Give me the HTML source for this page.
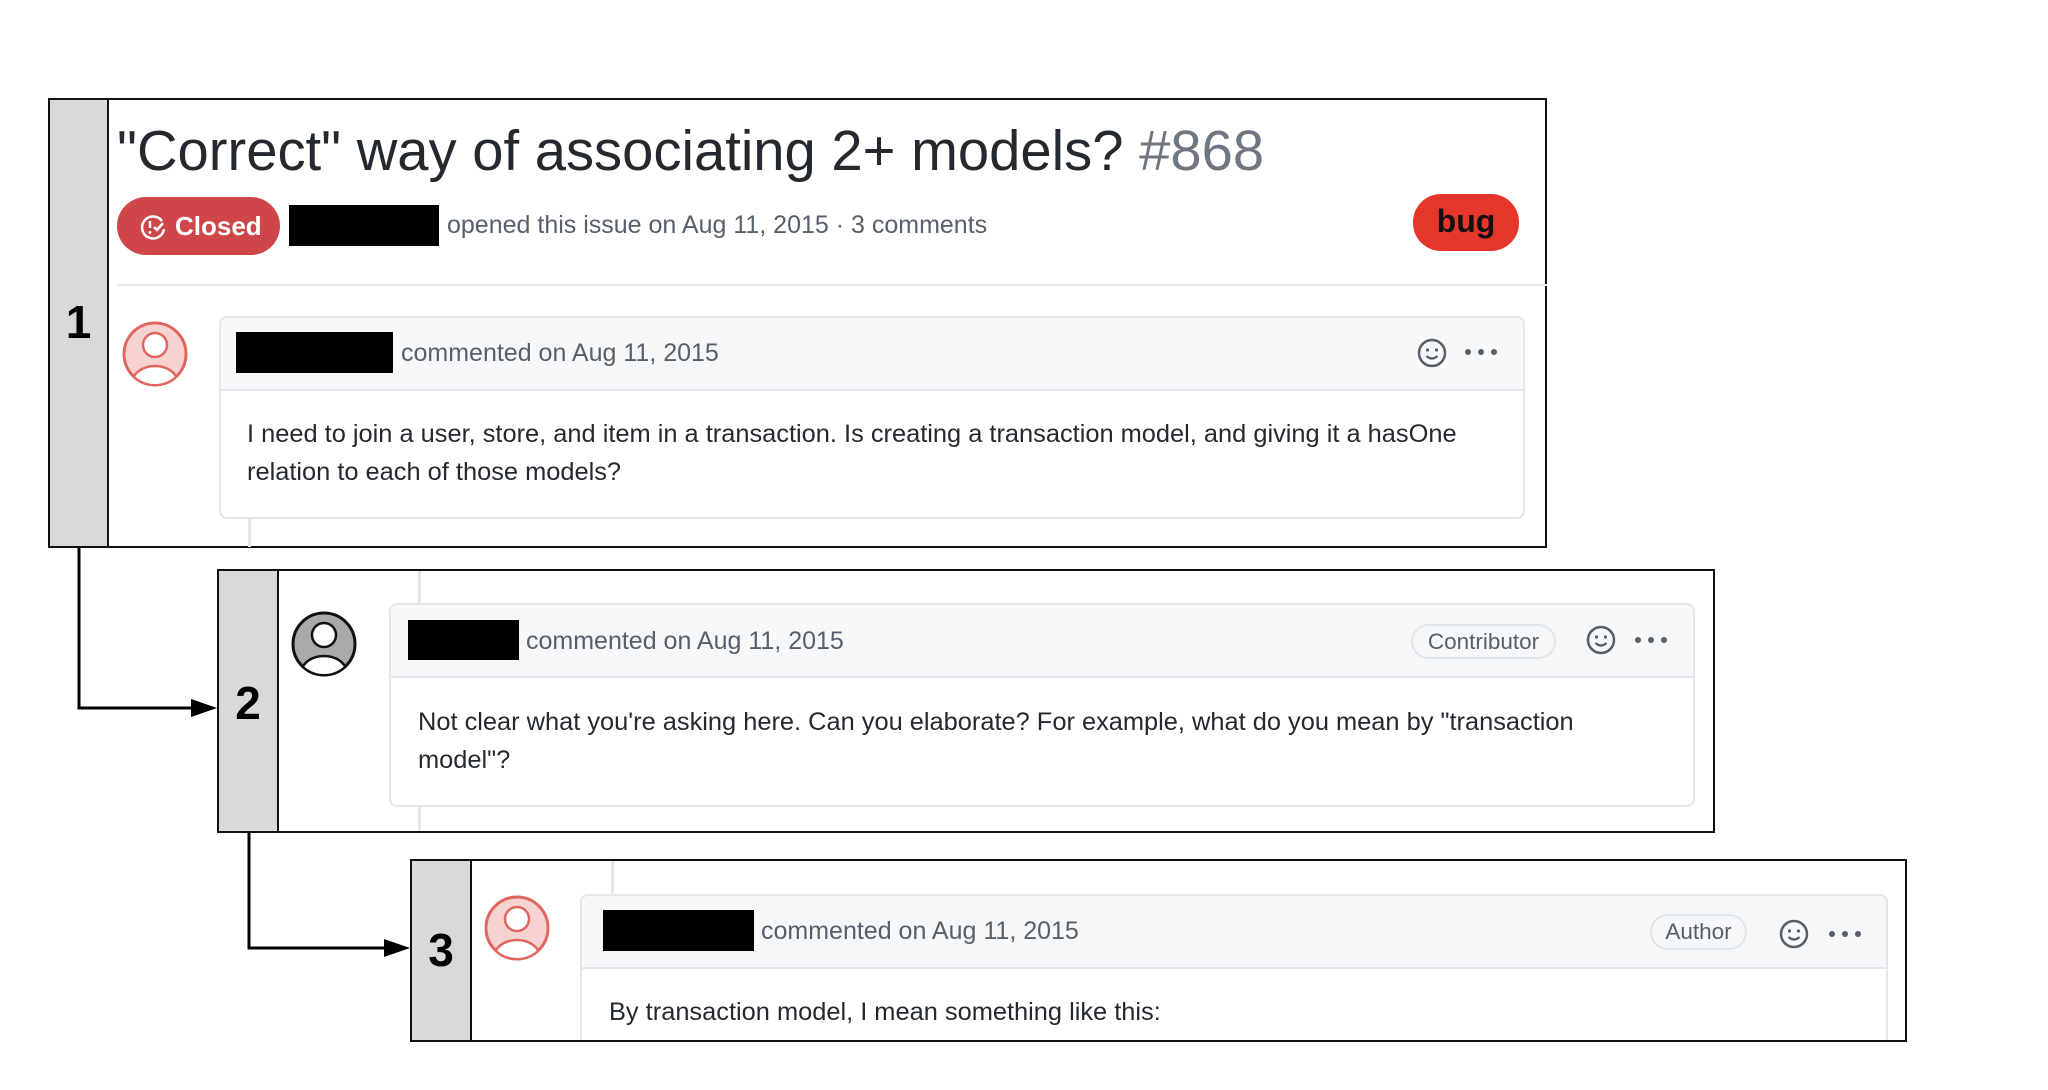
<!DOCTYPE html>
<html><head><meta charset="utf-8"><style>
*{margin:0;padding:0;box-sizing:border-box}
body{width:2048px;height:1090px;background:#fff;position:relative;overflow:hidden;font-family:"Liberation Sans",Arial,sans-serif;color:#24292f}
.a{position:absolute}
.box{position:absolute;border:2px solid #111;background:#fff;overflow:hidden}
.strip{position:absolute;left:0;top:0;bottom:0;background:#d9d9d9;border-right:2px solid #111}
.num{position:absolute;font-weight:bold;font-size:46px;color:#000;width:100%;text-align:center}
.cbox{position:absolute;border:2px solid #e3e6ea;border-radius:8px;background:#fff;overflow:hidden}
.chead{position:absolute;left:0;right:0;top:0;background:#f6f8fa;border-bottom:2px solid #e3e6ea}
.blk{position:absolute;background:#000}
.meta{position:absolute;font-size:25px;color:#57606a;white-space:nowrap}
.body{position:absolute;font-size:25.4px;color:#24292f;line-height:38px;white-space:nowrap}
.badge{position:absolute;border:2px solid #e3e6ea;border-radius:20px;font-size:22.5px;color:#57606a;text-align:center}
.vl{position:absolute;width:3px;background:#e3e6ea}
</style></head><body>

<!-- Box 1 -->
<div class="box" style="left:48px;top:98px;width:1499px;height:450px">
  <div class="strip" style="width:59px"><div class="num" style="top:195px">1</div></div>
</div>
<div class="a" style="left:117px;top:118px;font-size:56.2px;color:#24292f;white-space:nowrap">"Correct" way of associating 2+ models? <span style="color:#6e7781">#868</span></div>
<div class="a" style="left:117px;top:197px;width:163px;height:58px;background:#cf464a;border-radius:29px;color:#fff;font-size:26px;font-weight:bold">
  <svg class="a" style="left:22px;top:16px" width="28" height="28" viewBox="0 0 28 28"><path d="M23 8 A11 11 0 1 0 25 16" fill="none" stroke="#fff" stroke-width="2.5"/><line x1="11" y1="8" x2="11" y2="15" stroke="#fff" stroke-width="2.5"/><circle cx="11" cy="19.5" r="1.5" fill="#fff"/><path d="M15 14 l3 3 l6 -7" fill="none" stroke="#fff" stroke-width="2.5"/></svg>
  <span class="a" style="left:58px;top:14px">Closed</span>
</div>
<div class="blk" style="left:289px;top:205px;width:150px;height:41px"></div>
<div class="meta" style="left:447px;top:211px">opened this issue on Aug 11, 2015 · 3 comments</div>
<div class="a" style="left:1413px;top:194px;width:106px;height:57px;background:#e4362a;border-radius:28px;font-size:32px;font-weight:bold;color:#111;text-align:center;line-height:55px">bug</div>
<div class="a" style="left:117px;top:284px;width:1430px;height:2px;background:#e6e8eb"></div>

<svg class="a" style="left:122px;top:321px" width="66" height="66" viewBox="0 0 66 66"><defs><clipPath id="c"><circle cx="33" cy="33" r="30"/></clipPath></defs><circle cx="33" cy="33" r="31" fill="#f6d3d0" stroke="#e0675f" stroke-width="3"/><g clip-path="url(#c)"><circle cx="33" cy="24" r="12" fill="#fff" stroke="#e0675f" stroke-width="2.5"/><path d="M9 66 C9 38 57 38 57 66" fill="#fff" stroke="#e0675f" stroke-width="2.5"/></g></svg>
<div class="vl" style="left:248px;top:519px;height:28px"></div>
<div class="cbox" style="left:219px;top:316px;width:1306px;height:203px">
  <div class="chead" style="height:73px"></div>
  <div class="blk" style="left:15px;top:14px;width:157px;height:41px"></div>
  <div class="meta" style="left:180px;top:21px">commented on Aug 11, 2015</div>
  <div class="body" style="left:26px;top:97px">I need to join a user, store, and item in a transaction. Is creating a transaction model, and giving it a hasOne<br>relation to each of those models?</div>
</div>

<!-- Box 2 -->
<div class="box" style="left:217px;top:569px;width:1498px;height:264px">
  <div class="strip" style="width:60px"><div class="num" style="top:105px">2</div></div>
</div>
<div class="vl" style="left:418px;top:571px;height:32px"></div>
<div class="vl" style="left:418px;top:807px;height:24px"></div>
<svg class="a" style="left:291px;top:611px" width="66" height="66" viewBox="0 0 66 66"><defs><clipPath id="c2"><circle cx="33" cy="33" r="30"/></clipPath></defs><circle cx="33" cy="33" r="31" fill="#aaa" stroke="#111" stroke-width="3"/><g clip-path="url(#c2)"><circle cx="33" cy="24" r="12" fill="#fff" stroke="#111" stroke-width="2.5"/><path d="M9 66 C9 38 57 38 57 66" fill="#fff" stroke="#111" stroke-width="2.5"/></g></svg>
<div class="cbox" style="left:389px;top:603px;width:1306px;height:204px">
  <div class="chead" style="height:73px"></div>
  <div class="blk" style="left:17px;top:15px;width:111px;height:40px"></div>
  <div class="meta" style="left:135px;top:22px">commented on Aug 11, 2015</div>
  <div class="badge" style="left:1020px;top:19px;width:145px;height:35px;line-height:31px">Contributor</div>
  <div class="body" style="left:27px;top:98px">Not clear what you're asking here. Can you elaborate? For example, what do you mean by "transaction<br>model"?</div>
</div>

<!-- Box 3 -->
<div class="box" style="left:410px;top:859px;width:1497px;height:183px">
  <div class="strip" style="width:60px"><div class="num" style="top:62px">3</div></div>
</div>
<div class="vl" style="left:611px;top:861px;height:33px"></div>
<svg class="a" style="left:484px;top:895px" width="66" height="66" viewBox="0 0 66 66"><defs><clipPath id="c3"><circle cx="33" cy="33" r="30"/></clipPath></defs><circle cx="33" cy="33" r="31" fill="#f6d3d0" stroke="#e0675f" stroke-width="3"/><g clip-path="url(#c3)"><circle cx="33" cy="24" r="12" fill="#fff" stroke="#e0675f" stroke-width="2.5"/><path d="M9 66 C9 38 57 38 57 66" fill="#fff" stroke="#e0675f" stroke-width="2.5"/></g></svg>
<div class="cbox" style="left:580px;top:894px;width:1308px;height:146px;border-bottom:none;border-radius:8px 8px 0 0">
  <div class="chead" style="height:73px"></div>
  <div class="blk" style="left:21px;top:14px;width:151px;height:41px"></div>
  <div class="meta" style="left:179px;top:21px">commented on Aug 11, 2015</div>
  <div class="badge" style="left:1068px;top:18px;width:97px;height:36px;line-height:32px">Author</div>
  <div class="body" style="left:27px;top:97px">By transaction model, I mean something like this:</div>
</div>
<div class="a" style="left:410px;top:1040px;width:1497px;height:2px;background:#111"></div>

<!-- smileys and dots -->
<svg class="a" style="left:1416px;top:337px" width="32" height="32" viewBox="0 0 32 32"><circle cx="16" cy="16" r="13" fill="none" stroke="#57606a" stroke-width="2.5"/><circle cx="11.5" cy="13" r="1.6" fill="#57606a"/><circle cx="20.5" cy="13" r="1.6" fill="#57606a"/><path d="M10.5 19 q5.5 5 11 0" fill="none" stroke="#57606a" stroke-width="2.3"/></svg>
<svg class="a" style="left:1463px;top:346px" width="36" height="12" viewBox="0 0 36 12"><circle cx="5" cy="6" r="3" fill="#57606a"/><circle cx="18" cy="6" r="3" fill="#57606a"/><circle cx="31" cy="6" r="3" fill="#57606a"/></svg>
<svg class="a" style="left:1585px;top:624px" width="32" height="32" viewBox="0 0 32 32"><circle cx="16" cy="16" r="13" fill="none" stroke="#57606a" stroke-width="2.5"/><circle cx="11.5" cy="13" r="1.6" fill="#57606a"/><circle cx="20.5" cy="13" r="1.6" fill="#57606a"/><path d="M10.5 19 q5.5 5 11 0" fill="none" stroke="#57606a" stroke-width="2.3"/></svg>
<svg class="a" style="left:1633px;top:634px" width="36" height="12" viewBox="0 0 36 12"><circle cx="5" cy="6" r="3" fill="#57606a"/><circle cx="18" cy="6" r="3" fill="#57606a"/><circle cx="31" cy="6" r="3" fill="#57606a"/></svg>
<svg class="a" style="left:1778px;top:918px" width="32" height="32" viewBox="0 0 32 32"><circle cx="16" cy="16" r="13" fill="none" stroke="#57606a" stroke-width="2.5"/><circle cx="11.5" cy="13" r="1.6" fill="#57606a"/><circle cx="20.5" cy="13" r="1.6" fill="#57606a"/><path d="M10.5 19 q5.5 5 11 0" fill="none" stroke="#57606a" stroke-width="2.3"/></svg>
<svg class="a" style="left:1827px;top:928px" width="36" height="12" viewBox="0 0 36 12"><circle cx="5" cy="6" r="3" fill="#57606a"/><circle cx="18" cy="6" r="3" fill="#57606a"/><circle cx="31" cy="6" r="3" fill="#57606a"/></svg>

<!-- arrows -->
<svg class="a" style="left:0;top:0" width="2048" height="1090">
  <path d="M79 548 L79 708 L195 708" fill="none" stroke="#000" stroke-width="3"/>
  <polygon points="217,708 191,699 191,717" fill="#000"/>
  <path d="M249 833 L249 948 L390 948" fill="none" stroke="#000" stroke-width="3"/>
  <polygon points="410,948 384,939 384,957" fill="#000"/>
</svg>
</body></html>
